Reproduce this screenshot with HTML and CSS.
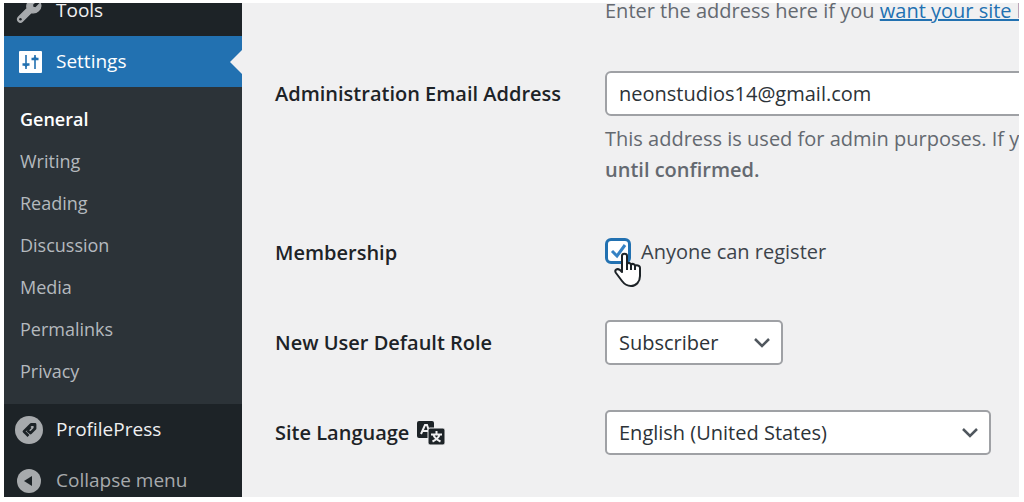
FILE: index.html
```html
<!DOCTYPE html>
<html lang="en">
<head>
<meta charset="utf-8">
<meta name="viewport" content="width=device-width, initial-scale=1">
<title>General Settings</title>
<link rel="stylesheet" href="styles.css">
</head>
<body>
<div class="shell">
  <nav class="sidebar" aria-label="Main menu">
    <a class="menu-item" href="#tools">
      <svg class="menu-icon" viewBox="0 0 20 20" aria-hidden="true"><path fill="#a7aaad" stroke="#a7aaad" d="M16.7 9.8c-1.400 1.400-3.300 1.800-5.100 1.300l-6.300 6.300c-.8.8-2.100.8-2.900 0s-.8-2.100 0-2.900l6.300-6.300C8.200 6.500 8.600 4.600 10 3.200 11.500 1.700 13.800 1.300 15.700 2.100l-3.300 3.300.4 2 2 .4 3.200-3.300c.8 1.800.2 3.900-1.300 5.300z"/><circle cx="3.900" cy="15.900" r=".9" fill="#1d2327"/></svg>
      <span>Tools</span>
    </a>
    <a class="menu-item current" href="#settings" aria-current="true">
      <svg class="menu-icon" viewBox="0 0 28 28" aria-hidden="true"><rect x="4" y="3" width="23" height="22" rx="1" fill="#fff"/><path d="M11 7v14M20 7v14" stroke="#2271b1" stroke-width="1.600"/><path d="M7.500 16.500h7M16.500 11h7" stroke="#2271b1" stroke-width="2.400"/><path d="M9 17l2 2.500 2-2.500zM18 10.500l2-2.500 2 2.500z" fill="#2271b1"/></svg>
      <span>Settings</span>
    </a>
    <div class="submenu">
      <a class="active" href="#general">General</a>
      <a href="#writing">Writing</a>
      <a href="#reading">Reading</a>
      <a href="#discussion">Discussion</a>
      <a href="#media">Media</a>
      <a href="#permalinks">Permalinks</a>
      <a href="#privacy">Privacy</a>
    </div>
    <a class="menu-item" href="#profilepress">
      <svg class="menu-icon" viewBox="0 0 28 28" aria-hidden="true"><circle cx="14" cy="14" r="14" fill="#a7aaad"/><path d="M12 14.500l3.500-3.500M13.500 20L9 15.500 16 8.500h4v4L15.500 17 12.500 14.500" fill="none" stroke="#1d2327" stroke-width="2.800" stroke-linejoin="round"/></svg>
      <span>ProfilePress</span>
    </a>
    <button class="menu-item collapse" type="button">
      <svg class="menu-icon" viewBox="0 0 28 28" aria-hidden="true"><circle cx="14" cy="14" r="12" fill="#a7aaad"/><path d="M17 9v10l-8-5z" fill="#1d2327"/></svg>
      <span>Collapse menu</span>
    </button>
  </nav>
  <main class="content">
    <form class="settings">
      <div class="row">
        <div class="label"></div>
        <p class="description">Enter the address here if you <a href="#home">want your site home page to be different</a></p>
      </div>
      <div class="row">
        <label class="label" for="email">Administration Email Address</label>
        <div class="field">
          <input class="text-input" id="email" type="email" value="neonstudios14@gmail.com">
          <p class="description spaced">This address is used for admin purposes. If you change this,<br><strong>until confirmed.</strong></p>
        </div>
      </div>
      <div class="row">
        <div class="label">Membership</div>
        <label class="check" for="register">
          <span class="check-box">
            <input id="register" type="checkbox" checked>
            <svg class="tick" viewBox="0 0 26 26" aria-hidden="true"><path d="M7 13l5 5 8-11" fill="none" stroke="#3582c4" stroke-width="3"/></svg>
            <svg class="cursor" viewBox="0 0 28 36" aria-hidden="true"><path d="M8 20V4c0-3 5-3 5 0v8c1-2 4-1 4 1 1-2 4-1 4 1 1-1 5-1 5 2v8c0 6-4 10-9 10-4 0-6-1-9-5l-6-8c-2-3 1-5 4-3z" fill="#fff" stroke="#1d2327" stroke-width="2" stroke-linejoin="round"/><path d="M13 12v6M17 13v5M21 14v4" stroke="#1d2327" stroke-width="2"/></svg>
          </span>
          <span>Anyone can register</span>
        </label>
      </div>
      <div class="row">
        <label class="label" for="role">New User Default Role</label>
        <div class="select role">
          <select id="role"><option>Subscriber</option></select>
          <svg class="chevron" viewBox="0 0 18 18" aria-hidden="true"><path d="M2 5l7 7 7-7" fill="none" stroke="#50575e" stroke-width="2.500"/></svg>
        </div>
      </div>
      <div class="row">
        <label class="label" for="language">Site Language
          <svg class="translate" viewBox="0 0 30 26" aria-hidden="true"><rect x="1" y="1" width="17" height="17" rx="2" fill="#1d2327"/><path d="M5 14l4-9h2l3 9M6 11h7" fill="none" stroke="#f0f0f1" stroke-width="2"/><rect x="12" y="8" width="17" height="17" rx="2" fill="#1d2327" stroke="#f0f0f1"/><path d="M20.500 11v3M15 14.500h11M17.500 15c1 3 4 5 7 6.500M23.500 15c-1 3-4 5-7 6.500" fill="none" stroke="#f0f0f1" stroke-width="2"/></svg>
        </label>
        <div class="select language">
          <select id="language"><option>English (United States)</option></select>
          <svg class="chevron" viewBox="0 0 18 18" aria-hidden="true"><path d="M2 5l7 7 7-7" fill="none" stroke="#50575e" stroke-width="2.500"/></svg>
        </div>
      </div>
    </form>
  </main>
</div>
</body>
</html>
```
FILE: styles.css
```css
* {
  box-sizing: border-box;
}

body {
  margin: 0;
  padding: 3px 5px 5px 4px;
  height: 100vh;
  overflow: hidden;
  background: #fff;
  color: #3c434a;
  font: 20px/31px "Open Sans", "Noto Sans", sans-serif;
}

.shell {
  display: grid;
  grid-template-columns: 238px minmax(0, 1fr);
  height: 100%;
  overflow: hidden;
  background: #f0f0f1;
}

.sidebar {
  overflow: hidden;
  background: #1d2327;
  font-size: 19px;
}

.menu-item {
  display: flex;
  align-items: center;
  gap: 13px;
  width: 100%;
  height: 51px;
  padding: 0 11px;
  color: #f0f0f1;
  text-decoration: none;
}

.menu-item:first-child {
  margin-top: -18px;
}

.menu-icon {
  width: 28px;
  height: 28px;
}

.current {
  position: relative;
  background: #2271b1;
  color: #fff;
}

.current::after {
  content: "";
  position: absolute;
  right: 0;
  border: 12px solid transparent;
  border-left-width: 0;
  border-right-color: #f0f0f1;
}

.submenu {
  display: grid;
  grid-auto-rows: 42px;
  align-items: center;
  padding: 11px 16px 12px;
  background: #2c3338;
  font-size: 18px;
}

.submenu a {
  color: #b4b9be;
  text-decoration: none;
}

.submenu .active {
  color: #fff;
  font-weight: 600;
}

.collapse {
  border: 0;
  background: none;
  color: #a7aaad;
  font: inherit;
}

.content {
  overflow: hidden;
  padding-left: 33px;
}

.settings {
  margin-top: -30px;
}

.row {
  display: grid;
  grid-template-columns: 330px minmax(0, 1fr);
  align-items: start;
  padding: 22px 0 23px;
}

.label {
  display: flex;
  align-items: center;
  gap: 7px;
  min-height: 45px;
  color: #1d2327;
  font-weight: 600;
}

.row:first-child .label {
  min-height: 31px;
}

.description {
  margin: 0;
  color: #646970;
  white-space: nowrap;
}

.description a {
  color: #2271b1;
}

.spaced {
  margin-top: 7px;
}

.description strong {
  font-weight: 600;
}

.text-input {
  display: block;
  width: 525px;
  height: 45px;
  padding: 0 12px;
  border: 2px solid #9fa1a5;
  border-radius: 6px;
  background: #fff;
  color: #2c3338;
  font: inherit;
}

.check {
  display: flex;
  align-items: center;
  gap: 10px;
  height: 42px;
}

.check-box {
  position: relative;
  display: grid;
  width: 26px;
  height: 26px;
}

.check-box input {
  grid-area: 1 / 1;
  width: 100%;
  height: 100%;
  margin: 0;
  border: 3px solid #2271b1;
  border-radius: 6px;
  background: #fff;
  appearance: none;
}

.tick {
  grid-area: 1 / 1;
  z-index: 1;
  pointer-events: none;
}

.cursor {
  position: absolute;
  z-index: 2;
  top: 14px;
  left: 9px;
  width: 28px;
  height: 36px;
  pointer-events: none;
}

.select {
  display: grid;
  align-items: center;
  max-width: 100%;
}

.role {
  width: 178px;
}

.language {
  width: 386px;
}

.select select {
  grid-area: 1 / 1;
  width: 100%;
  height: 45px;
  padding: 0 40px 0 12px;
  border: 2px solid #9fa1a5;
  border-radius: 5px;
  background: #fff;
  color: #2c3338;
  font: inherit;
  appearance: none;
}

.chevron {
  grid-area: 1 / 1;
  justify-self: end;
  width: 18px;
  height: 18px;
  margin-right: 12px;
  pointer-events: none;
}

.translate {
  width: 30px;
  height: 26px;
}
```
